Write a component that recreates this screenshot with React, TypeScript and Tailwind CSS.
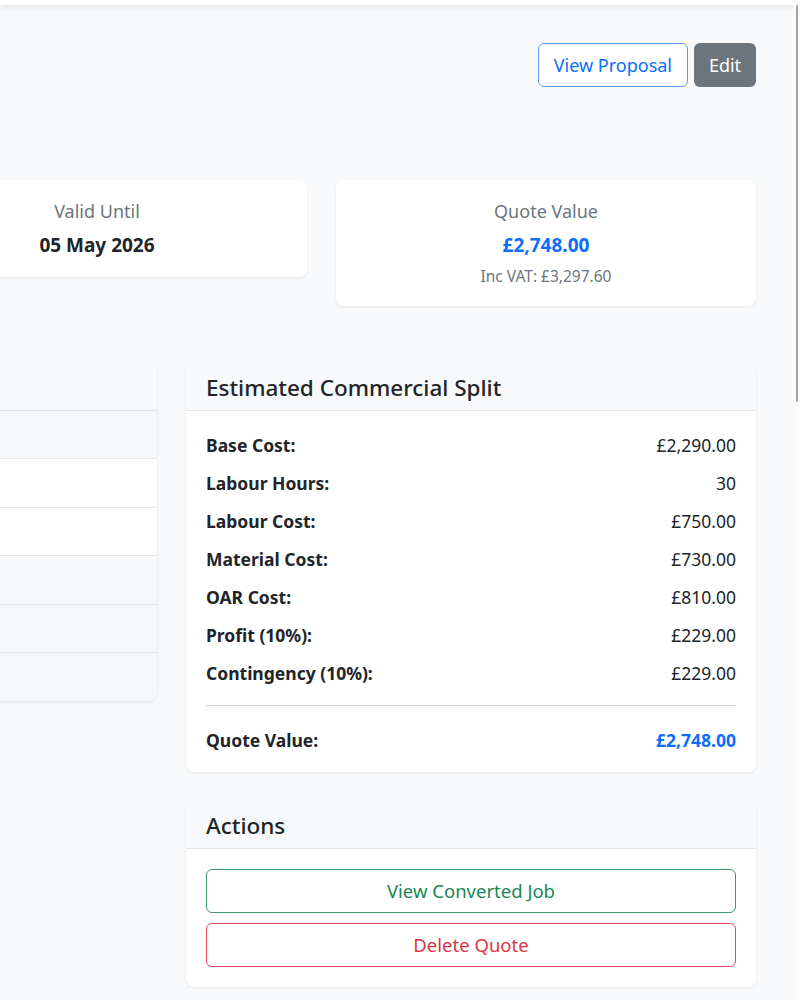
const splitRows = [
  { label: 'Base Cost:', value: '£2,290.00' },
  { label: 'Labour Hours:', value: '30' },
  { label: 'Labour Cost:', value: '£750.00' },
  { label: 'Material Cost:', value: '£730.00' },
  { label: 'OAR Cost:', value: '£810.00' },
  { label: 'Profit (10%):', value: '£229.00' },
  { label: 'Contingency (10%):', value: '£229.00' },
];

// striped rows of the table card that is cut off on the left
const tableRows = [true, false, false, true, true, true];

function StatCard({ title, value, sub, valueClass }: { title: string; value: string; sub?: string; valueClass: string }) {
  return (
    <div className="w-[420px] shrink-0 bg-white rounded-lg shadow-[0_1px_3px_rgba(0,0,0,0.08)] pt-[19px] pb-[20px] text-center">
      <div className="text-[18px] leading-6 text-[#6c757d]">{title}</div>
      <div className={`mt-[10px] text-[19px] leading-6 font-bold ${valueClass}`}>{value}</div>
      {sub && <div className="mt-[9px] text-[15.5px] leading-5 text-[#6c757d]">{sub}</div>}
    </div>
  );
}

function CardHeader({ title }: { title: string }) {
  return (
    <div className="h-[48px] bg-[#f8f9fa] border-b border-[#e3e5e8] rounded-t-lg px-5 pt-[3px] flex items-center">
      <h5 className="text-[22.5px] font-medium text-[#212529]">{title}</h5>
    </div>
  );
}

export default function App() {
  return (
    <div className="w-[800px] h-[1000px] overflow-hidden flex bg-[#f8f9fa] font-['Noto_Sans',sans-serif] text-[#212529]">
      <div className="w-[794px] flex flex-col">
        <div className="h-[5px] bg-white shadow-[0_1px_6px_rgba(0,0,0,0.12)]" />

        <div className="pr-[38px] mt-[38px] flex justify-end gap-[6px]">
          <button className="h-[44px] px-[15px] rounded-md border border-[#5b9bfd] text-[#0d6efd] text-[18px] bg-white">
            View Proposal
          </button>
          <button className="h-[44px] w-[62px] rounded-md bg-[#6c757d] text-white text-[18px]">Edit</button>
        </div>

        <div className="pr-[38px] mt-[93px] flex justify-end items-start gap-[29px]">
          <StatCard title="Valid Until" value="05 May 2026" valueClass="text-[#212529]" />
          <StatCard title="Quote Value" value="£2,748.00" sub="Inc VAT: £3,297.60" valueClass="text-[#0d6efd]" />
        </div>

        <div className="pr-[38px] mt-[57px] flex justify-end items-start gap-[29px]">
          <div className="w-[600px] shrink-0 bg-white rounded-lg shadow-[0_1px_3px_rgba(0,0,0,0.08)] overflow-hidden">
            <div className="h-[48px] bg-[#f8f9fa] border-b border-[#e3e5e8]" />
            {tableRows.map((gray, i) => (
              <div
                key={i}
                className={`h-[48.4px] ${gray ? 'bg-[#f7f8fa]' : 'bg-white'} ${i < tableRows.length - 1 ? 'border-b border-[#e3e5e8]' : ''}`}
              />
            ))}
          </div>

          <div className="w-[570px] shrink-0 flex flex-col gap-[29px]">
            <div className="bg-white rounded-lg shadow-[0_1px_3px_rgba(0,0,0,0.08)]">
              <CardHeader title="Estimated Commercial Split" />
              <div className="px-5 pt-[15px] pb-[13px]">
                {splitRows.map((r) => (
                  <div key={r.label} className="h-[38px] flex items-center justify-between text-[17.5px]">
                    <span className="font-bold">{r.label}</span>
                    <span>{r.value}</span>
                  </div>
                ))}
                <div className="mt-[13px] mb-[15px] h-px bg-[#cfd1d3]" />
                <div className="h-[38px] flex items-center justify-between text-[17.5px] font-bold">
                  <span>Quote Value:</span>
                  <span className="text-[#0d6efd]">£2,748.00</span>
                </div>
              </div>
            </div>

            <div className="bg-white rounded-lg shadow-[0_1px_3px_rgba(0,0,0,0.08)]">
              <CardHeader title="Actions" />
              <div className="px-5 py-5 flex flex-col gap-[10px]">
                <button className="h-[44px] rounded-md border border-[#3f9a6c] text-[#198754] text-[18.5px]">
                  View Converted Job
                </button>
                <button className="h-[44px] rounded-md border border-[#e04b59] text-[#dc3545] text-[18.5px]">
                  Delete Quote
                </button>
              </div>
            </div>
          </div>
        </div>
      </div>

      <div className="w-[6px] bg-[#fbfbfb] pl-[2px] pt-[5px]">
        <div className="w-[2px] h-[397px] bg-[#a3a3a3] rounded-full" />
      </div>
    </div>
  );
}
